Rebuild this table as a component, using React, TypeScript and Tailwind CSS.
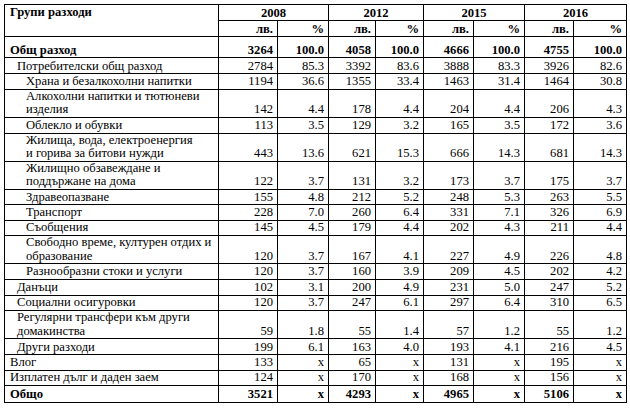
import React from "react";

type Row = {
  label: string[];
  level: 0 | 1 | 2;
  bold?: boolean;
  h: string;
  vals: string[];
};

const ROWS: Row[] = [
  { label: ["Общ разход"], level: 0, bold: true, h: "h-[21px]", vals: ["3264", "100.0", "4058", "100.0", "4666", "100.0", "4755", "100.0"] },
  { label: ["Потребителски общ разход"], level: 1, h: "h-[16px]", vals: ["2784", "85.3", "3392", "83.6", "3888", "83.3", "3926", "82.6"] },
  { label: ["Храна и безалкохолни напитки"], level: 2, h: "h-[15.6px]", vals: ["1194", "36.6", "1355", "33.4", "1463", "31.4", "1464", "30.8"] },
  { label: ["Алкохолни напитки и тютюневи", "изделия"], level: 2, h: "h-[28.4px]", vals: ["142", "4.4", "178", "4.4", "204", "4.4", "206", "4.3"] },
  { label: ["Облекло и обувки"], level: 2, h: "h-[15.6px]", vals: ["113", "3.5", "129", "3.2", "165", "3.5", "172", "3.6"] },
  { label: ["Жилища, вода, електроенергия", "и горива за битови нужди"], level: 2, h: "h-[27.7px]", vals: ["443", "13.6", "621", "15.3", "666", "14.3", "681", "14.3"] },
  { label: ["Жилищно обзавеждане и", "поддържане на дома"], level: 2, h: "h-[26.7px]", vals: ["122", "3.7", "131", "3.2", "173", "3.7", "175", "3.7"] },
  { label: ["Здравеопазване"], level: 2, h: "h-[15.8px]", vals: ["155", "4.8", "212", "5.2", "248", "5.3", "263", "5.5"] },
  { label: ["Транспорт"], level: 2, h: "h-[15.6px]", vals: ["228", "7.0", "260", "6.4", "331", "7.1", "326", "6.9"] },
  { label: ["Съобщения"], level: 2, h: "h-[15px]", vals: ["145", "4.5", "179", "4.4", "202", "4.3", "211", "4.4"] },
  { label: ["Свободно време, културен отдих и", "образование"], level: 2, h: "h-[28.4px]", vals: ["120", "3.7", "167", "4.1", "227", "4.9", "226", "4.8"] },
  { label: ["Разнообразни стоки и услуги"], level: 2, h: "h-[15.6px]", vals: ["120", "3.7", "160", "3.9", "209", "4.5", "202", "4.2"] },
  { label: ["Данъци"], level: 1, h: "h-[16px]", vals: ["102", "3.1", "200", "4.9", "231", "5.0", "247", "5.2"] },
  { label: ["Социални осигуровки"], level: 1, h: "h-[15px]", vals: ["120", "3.7", "247", "6.1", "297", "6.4", "310", "6.5"] },
  { label: ["Регулярни трансфери към други", "домакинства"], level: 1, h: "h-[28.4px]", vals: ["59", "1.8", "55", "1.4", "57", "1.2", "55", "1.2"] },
  { label: ["Други разходи"], level: 1, h: "h-[16px]", vals: ["199", "6.1", "163", "4.0", "193", "4.1", "216", "4.5"] },
  { label: ["Влог"], level: 0, h: "h-[15.6px]", vals: ["133", "x", "65", "x", "131", "x", "195", "x"] },
  { label: ["Изплатен дълг и даден заем"], level: 0, h: "h-[15px]", vals: ["124", "x", "170", "x", "168", "x", "156", "x"] },
  { label: ["Общо"], level: 0, bold: true, h: "h-[17px]", vals: ["3521", "x", "4293", "x", "4965", "x", "5106", "x"] },
];

const YEARS = ["2008", "2012", "2015", "2016"];
const COLS = ["w-[214px]", "w-[59px]", "w-[51px]", "w-[47px]", "w-[48px]", "w-[50px]", "w-[51px]", "w-[49px]", "w-[53px]"];

const indent = ["pl-[5px]", "pl-[12px]", "pl-[21px]"];

export default function App() {
  return (
    <div className="w-[630px] h-[408px] bg-white pt-[4px] pl-[4px] text-black font-['Liberation_Serif','Times_New_Roman',serif]">
      <table className="w-[622px] table-fixed border-collapse text-[12.6px] leading-[13.5px]">
        <colgroup>
          {COLS.map((c, i) => (
            <col key={i} className={c} />
          ))}
        </colgroup>
        <thead>
          <tr className="h-[16px]">
            <th rowSpan={2} className="border border-black align-top text-left font-bold pl-[5px] pt-[1px]">
              Групи разходи
            </th>
            {YEARS.map((y) => (
              <th key={y} colSpan={2} className="border border-black text-center font-bold align-bottom">
                {y}
              </th>
            ))}
          </tr>
          <tr className="h-[16px]">
            {YEARS.map((y) => (
              <React.Fragment key={y}>
                <th className="border border-black text-right font-bold pr-[4px] align-bottom">лв.</th>
                <th className="border border-black text-right font-bold pr-[4px] align-bottom">%</th>
              </React.Fragment>
            ))}
          </tr>
        </thead>
        <tbody>
          {ROWS.map((r, i) => (
            <tr key={i} className={r.h}>
              <td
                className={`border border-black align-bottom whitespace-nowrap ${indent[r.level]} ${
                  r.bold ? "font-bold" : ""
                }`}
              >
                {r.label.map((l, j) => (
                  <div key={j}>{l}</div>
                ))}
              </td>
              {r.vals.map((v, j) => (
                <td
                  key={j}
                  className={`border border-black align-bottom text-right pr-[4px] ${r.bold ? "font-bold" : ""}`}
                >
                  {v}
                </td>
              ))}
            </tr>
          ))}
        </tbody>
      </table>
    </div>
  );
}
